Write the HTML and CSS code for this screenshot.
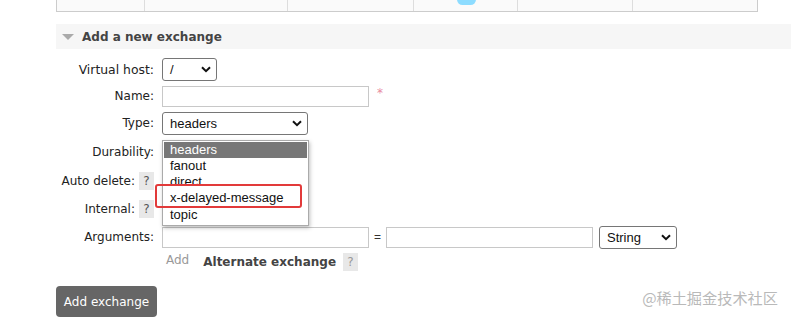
FILE: index.html
```html
<!DOCTYPE html>
<html>
<head>
<meta charset="utf-8">
<link rel="stylesheet" href="styles.css">
</head>
<body>
<div class="page">
  <div class="toptable">
    <div class="cell c1"></div>
    <div class="cell c2"></div>
    <div class="cell c3"></div>
    <div class="cell c4"><span class="blob"></span></div>
    <div class="cell c5"></div>
    <div class="cell c6"></div>
  </div>

  <div class="section-head">
    <span class="tri"></span>
    <h2>Add a new exchange</h2>
  </div>

  <div class="form">
    <div class="row r-vhost">
      <div class="label">Virtual host:</div>
      <div class="field">
        <div class="select sel-vhost"><span>/</span><svg class="chev" viewBox="0 0 10 7" width="10" height="7"><path d="M1 1.2 L5 5.2 L9 1.2" fill="none" stroke="#111" stroke-width="2"/></svg></div>
      </div>
    </div>
    <div class="row r-name">
      <div class="label">Name:</div>
      <div class="field">
        <div class="input wide"></div><span class="req">*</span>
      </div>
    </div>
    <div class="row r-type">
      <div class="label">Type:</div>
      <div class="field">
        <div class="select sel-type"><span>headers</span><svg class="chev" viewBox="0 0 10 7" width="10" height="7"><path d="M1 1.2 L5 5.2 L9 1.2" fill="none" stroke="#111" stroke-width="2"/></svg></div>
        <div class="dropdown">
          <div class="opt active">headers</div>
          <div class="opt">fanout</div>
          <div class="opt">direct</div>
          <div class="opt">x-delayed-message</div>
          <div class="opt">topic</div>
          <div class="mark"></div>
        </div>
      </div>
    </div>
    <div class="row r-dur">
      <div class="label">Durability:</div>
      <div class="field"></div>
    </div>
    <div class="row r-auto">
      <div class="label">Auto delete: <span class="help">?</span></div>
      <div class="field"></div>
    </div>
    <div class="row r-int">
      <div class="label">Internal: <span class="help">?</span></div>
      <div class="field"></div>
    </div>
    <div class="row r-args">
      <div class="label">Arguments:</div>
      <div class="field">
        <div class="input wide"></div>
        <span class="eq">=</span>
        <div class="input wide"></div>
        <div class="select sel-str"><span>String</span><svg class="chev" viewBox="0 0 10 7" width="10" height="7"><path d="M1 1.2 L5 5.2 L9 1.2" fill="none" stroke="#111" stroke-width="2"/></svg></div>
      </div>
    </div>
    <div class="row r-add">
      <div class="label"></div>
      <div class="field">
        <span class="addlink">Add</span>
        <span class="alt">Alternate exchange</span>
        <span class="help">?</span>
      </div>
    </div>
  </div>

  <div class="actions">
    <button class="btn">Add exchange</button>
    <span class="watermark">@稀土掘金技术社区</span>
  </div>
</div>
</body>
</html>
```
FILE: styles.css
```css
* { box-sizing: border-box; }
html, body { margin: 0; padding: 0; background: #fff; }
body {
  width: 791px;
  height: 327px;
  overflow: hidden;
  font-family: "DejaVu Sans", Verdana, sans-serif;
  font-size: 12px;
  color: #222;
}
.page { padding-left: 56px; }

.toptable {
  display: flex;
  width: 702px;
  height: 12px;
  border-left: 1px solid #ccc;
  border-right: 1px solid #ccc;
  border-bottom: 1px solid #ccc;
  background: #fafafa;
}
.cell { height: 100%; border-right: 1px solid #ddd; position: relative; }
.cell:last-child { border-right: none; }
.c1 { width: 88px; }
.c2 { width: 143px; }
.c3 { width: 126px; }
.c4 { width: 104px; }
.c5 { width: 115px; }
.c6 { flex: 1; }
.blob {
  position: absolute;
  left: 43px;
  top: -6px;
  width: 19px;
  height: 11px;
  border-radius: 6px;
  background: #8ddcff;
}

.section-head {
  margin-top: 12px;
  height: 25px;
  background: #f6f6f6;
  display: flex;
  align-items: center;
  padding-left: 6px;
}
.tri {
  width: 0; height: 0;
  border-left: 6px solid transparent;
  border-right: 6px solid transparent;
  border-top: 6px solid #aaa;
  margin-right: 8px;
  margin-top: 1px;
}
.section-head h2 {
  margin: 0;
  font-size: 12px;
  font-weight: bold;
  color: #444;
}

.form { margin-top: 6px; }
.row {
  display: grid;
  grid-template-columns: 98px 1fr;
  column-gap: 8px;
  align-items: center;
  height: 28px;
}
.r-name { height: 26px; }
.r-dur, .r-auto { height: 29px; }
.r-add { height: 22px; }
.label {
  text-align: right;
  white-space: nowrap;
  display: flex;
  justify-content: flex-end;
  align-items: center;
  gap: 4px;
  color: #222;
}
.r-vhost .label { font-size: 12.4px; }
.field { display: flex; align-items: center; position: relative; }

.help {
  display: inline-flex;
  align-items: center;
  justify-content: center;
  width: 15px;
  height: 18px;
  background: #e8e8e8;
  color: #555;
  font-size: 12px;
}

.select {
  display: flex;
  align-items: center;
  justify-content: space-between;
  height: 23px;
  border: 1px solid #767676;
  border-radius: 3px;
  background: #fff;
  padding: 0 5px 0 7px;
  font-family: "Liberation Sans", Arial, sans-serif;
  font-size: 13px;
  color: #111;
}
.chev { display: block; }
.sel-vhost { width: 55px; }
.sel-type { width: 146px; }
.sel-str { width: 78px; margin-left: 6px; }

.input {
  height: 21px;
  border: 1px solid #c8c8c8;
  background: #fff;
}
.wide { width: 207px; }
.req { color: #e88aa0; margin-left: 8px; font-size: 12px; margin-top: -6px; }
.eq { width: 17px; text-align: center; font-family: "Liberation Sans", Arial, sans-serif; font-size: 12px; color: #333; }

.dropdown {
  position: absolute;
  left: 0;
  top: 28px;
  width: 147px;
  background: #fff;
  border: 1px solid #aaa;
  box-shadow: 1px 2px 4px rgba(0,0,0,0.25);
  padding: 1px 1px 2px;
  font-family: "Liberation Sans", Arial, sans-serif;
  font-size: 13px;
  color: #111;
  z-index: 5;
}
.opt { height: 16.3px; line-height: 16px; padding-left: 6px; }
.opt.active { background: #777; color: #fff; }
.mark {
  position: absolute;
  left: -8px;
  top: 43px;
  width: 147px;
  height: 24px;
  border: 2px solid #e23a3a;
  border-radius: 3px;
}

.addlink { color: #999; margin-left: 4px; margin-top: -5px; }
.alt { font-weight: bold; color: #444; margin-left: 14px; font-size: 12px; }
.r-add .help { margin-left: 7px; color: #999; }

.actions {
  margin-top: 13px;
  display: flex;
  align-items: center;
}
.btn {
  height: 31px;
  width: 101px;
  border: none;
  border-radius: 4px;
  background: #666;
  color: #fff;
  font-family: "DejaVu Sans", Verdana, sans-serif;
  font-size: 12px;
  padding: 0;
}
.watermark {
  align-self: flex-start;
  margin-left: auto;
  margin-right: 13px;
  margin-top: 0;
  line-height: 22px;
  font-family: "Noto Sans CJK SC", sans-serif;
  font-size: 15.2px;
  color: #b9b9b9;
}
```
